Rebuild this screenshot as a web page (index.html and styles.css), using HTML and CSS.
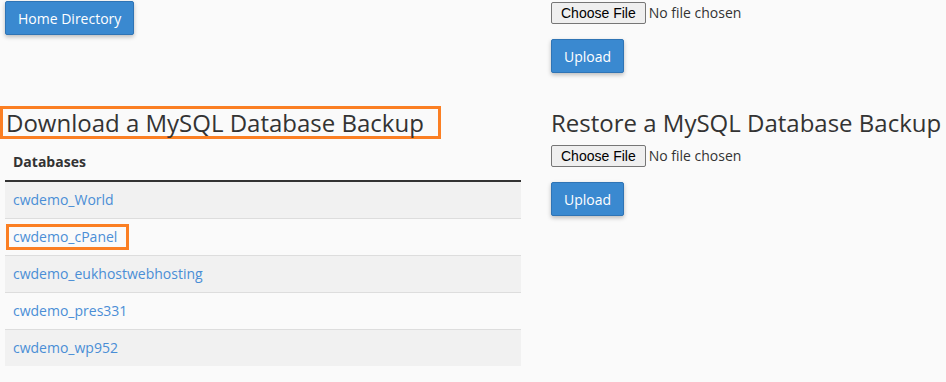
FILE: index.html
```html
<!DOCTYPE html>
<html lang="en">
<head>
    <meta charset="UTF-8">
    <meta name="viewport" content="width=device-width, initial-scale=1.0">
    <title>Backups</title>
    <link rel="stylesheet" href="styles.css">
</head>
<body>
    <div class="backup-row top-row">
        <div class="left-col">
            <button class="btn-primary">Home Directory</button>
        </div>
        <div class="right-col">
            <input type="file" class="file-input">
            <button class="btn-primary upload-btn">Upload</button>
        </div>
    </div>

    <div class="backup-row">
        <div class="left-col">
            <h2 class="section-title highlighted">Download a MySQL Database Backup</h2>
            <table class="db-table">
                <thead>
                    <tr><th>Databases</th></tr>
                </thead>
                <tbody>
                    <tr><td><a href="#">cwdemo_World</a></td></tr>
                    <tr><td><a href="#" class="highlighted">cwdemo_cPanel</a></td></tr>
                    <tr><td><a href="#">cwdemo_eukhostwebhosting</a></td></tr>
                    <tr><td><a href="#">cwdemo_pres331</a></td></tr>
                    <tr><td><a href="#">cwdemo_wp952</a></td></tr>
                </tbody>
            </table>
        </div>
        <div class="right-col">
            <h2 class="section-title">Restore a MySQL Database Backup</h2>
            <input type="file" class="file-input">
            <button class="btn-primary upload-btn">Upload</button>
        </div>
    </div>
</body>
</html>
```

FILE: styles.css
```css
* {
    margin: 0;
    padding: 0;
    box-sizing: border-box;
}

body {
    background-color: #fafafa;
    font-family: 'Open Sans', sans-serif;
    font-size: 14px;
    color: #333;
    overflow: hidden;
}

.backup-row {
    display: flex;
    gap: 30px;
    padding-left: 5px;
}

.left-col {
    width: 516px;
    flex-shrink: 0;
}

.right-col {
    display: flex;
    flex-direction: column;
    align-items: flex-start;
}

.top-row {
    height: 104px;
    padding-top: 1px;
}

.top-row .right-col {
    padding-top: 1px;
}

.btn-primary {
    font-family: 'Open Sans', sans-serif;
    font-size: 14px;
    color: #fff;
    background-color: #3a89d0;
    border: 1px solid #2f74b5;
    border-radius: 2px;
    padding: 0 12px;
    height: 34px;
    box-shadow: 0 2px 4px rgba(0, 0, 0, 0.25);
    cursor: pointer;
}

.upload-btn {
    margin-top: 15px;
}

.file-input {
    display: block;
    font-family: 'Open Sans', sans-serif;
    font-size: 14px;
    line-height: 22px;
    color: #333;
}

.file-input::file-selector-button {
    font-family: 'Liberation Sans', Arial, sans-serif;
    font-size: 14px;
    color: #000;
    background-color: #efefef;
    border: 1px solid #767676;
    border-radius: 2px;
    padding: 0 9px;
    height: 22px;
    margin-right: 3px;
    vertical-align: top;
}

.section-title {
    font-size: 24px;
    font-weight: 400;
    color: #333;
    line-height: 27px;
    white-space: nowrap;
}

.left-col .section-title {
    width: fit-content;
    margin-top: 2px;
    margin-left: -5px;
    padding: 0 14px 0 3px;
}

.right-col .section-title {
    margin-top: 5px;
    margin-bottom: 9px;
}

.highlighted {
    border: 3px solid #fb7f23;
}

.db-table {
    width: 100%;
    border-collapse: collapse;
    margin-top: 5px;
}

.db-table th {
    text-align: left;
    font-weight: 700;
    font-size: 14px;
    line-height: 20px;
    color: #333;
    padding: 8px;
    border-bottom: 2px solid #333;
}

.db-table td {
    height: 37px;
    padding: 0 8px;
    border-bottom: 1px solid #ddd;
}

.db-table tbody tr:nth-child(odd) td {
    background-color: #f1f1f1;
}

.db-table tbody tr:last-child td {
    border-bottom: none;
}

.db-table a {
    color: #4a8ed6;
    text-decoration: none;
}

.db-table a.highlighted {
    display: inline-block;
    vertical-align: middle;
    margin-left: -7px;
    padding: 0 9px 0 4px;
    line-height: 20px;
}
```
